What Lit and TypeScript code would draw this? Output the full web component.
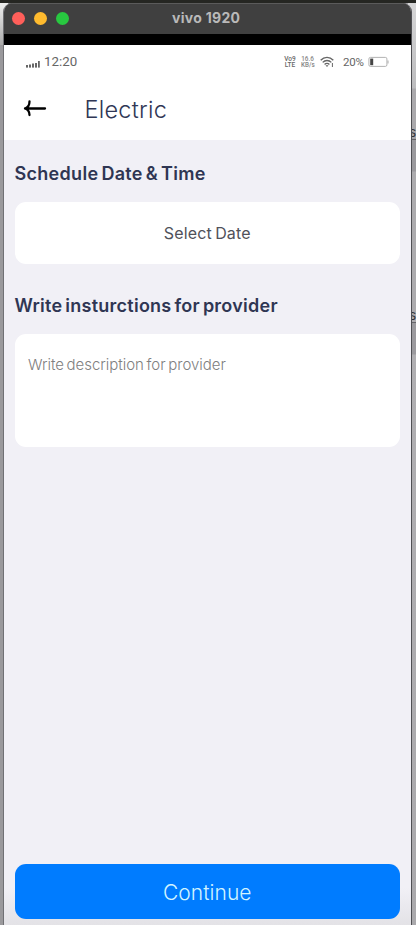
import { LitElement, html, css } from "lit";
import { customElement } from "lit/decorators.js";

@customElement("status-bar")
class StatusBar extends LitElement {
  static styles = css`
    :host { display: flex; align-items: center; height: 34px; padding: 0 22px 0 22px; color: #666; font-family: Roboto, sans-serif; box-sizing: border-box; }
    .signal { width: 15px; height: 8px; margin-top: 4px; }
    .time { font-size: 13.3px; margin-left: 3px; line-height: 16px; }
    .space { flex: 1; }
    .net { font-size: 6.5px; line-height: 6px; text-align: center; font-weight: 500; width: 12px; margin-right: 5px; white-space: nowrap; }
    .net.speed { width: 13px; margin-right: 6px; color: #858585; font-size: 6.3px; }
    .wifi { width: 14px; height: 12px; margin-right: 9px; }
    .pct { font-size: 11.5px; line-height: 16px; width: 21px; margin-right: 4px; white-space: nowrap; letter-spacing: -0.2px; }
    .battery { width: 21px; height: 12px; }
  `;
  render() {
    return html`
      <svg class="signal" viewBox="0 0 15 8" fill="#666">
        <rect x="0" y="5" width="2" height="2.6" /><rect x="3" y="4.5" width="2" height="3.1" /><rect x="6" y="3.5" width="2" height="4.1" /><rect x="9" y="3" width="2" height="4.6" /><rect x="12" y="1" width="1.8" height="6.6" />
      </svg>
      <span class="time">12:20</span>
      <span class="space"></span>
      <span class="net">Vo9<br />LTE</span>
      <span class="net speed">16.6<br />KB/s</span>
      <svg class="wifi" viewBox="0 0 14 12" fill="none" stroke="#666" stroke-width="1.4">
        <path d="M.7 4.2C4.3 .4 9.7 .4 13.3 4.2" /><path d="M2.7 6.4c2.4-2.6 6.2-2.6 8.6 0" /><path d="M4.6 8.4c1.4-1.4 3.4-1.4 4.8 0" />
        <path d="M5.5 9.3h3L7 11z" fill="#666" stroke="none" /><path d="M12.4 7v4" stroke-width="1" />
      </svg>
      <span class="pct">20%</span>
      <svg class="battery" viewBox="0 0 21 12" fill="none">
        <rect x=".9" y="1.4" width="18" height="9" rx="1.5" stroke="#aaa" stroke-width=".9" />
        <rect x="2.2" y="2.6" width="3" height="6.6" fill="#444" /><path d="M20 4.5v3" stroke="#aaa" />
      </svg>
    `;
  }
}

@customElement("app-root")
class AppRoot extends LitElement {
  static styles = css`
    :host { display: block; width: 416px; height: 925px; overflow: hidden; position: relative; background: linear-gradient(90deg, #9a999c 0 50%, #a9a8ab 50%); font-family: Inter, sans-serif; }
    .strip { height: 3px; background: #252622; }
    .desk { position: absolute; z-index: 0; right: 0; top: 3px; width: 8px; height: 922px; background: linear-gradient(#d6d6d7 0, #bcbcbe 85px, #aaa9ac 86px, #aaa9ac 135px, #9a999d 136px, #9a999d 168px, #acabae 169px, #acabae 319px, #9b9a9e 320px, #9b9a9e 351px, #b0afb2 352px, #aaa9ac 100%); }
    .peek { position: absolute; right: 0; width: 7px; font: 14px/20px "Liberation Sans", sans-serif; color: #343438; border-bottom: 1px solid #66666a; height: 17px; }
    .first { top: 122px; }
    .second { top: 305px; }
    .corner { position: absolute; left: 0; top: 3px; width: 8px; height: 42px; background: linear-gradient(#eee, #aaa); }
    .window { position: relative; margin: 0 4px 0 3px; height: 922px; box-sizing: border-box; border: solid #707074; border-width: 0 1px; border-right-color: #505054; border-radius: 9px 9px 0 0; overflow: hidden; display: flex; flex-direction: column; background: linear-gradient(#f1f0f6 0 885px, #e3e2e6); }
    .titlebar { height: 31px; background: #404040; display: flex; align-items: center; padding-left: 8px; flex: none; box-shadow: inset 0 1px #5b5b5b; }
    .dot { width: 13px; height: 13px; border-radius: 50%; margin-right: 9px; }
    .red { background: #ff5f5a; }
    .yellow { background: #ffbb2e; }
    .green { background: #28c840; }
    .name { color: #b9b9b9; font-weight: 700; font-size: 14px; line-height: 18px; margin: -2px 0 0 94px; white-space: nowrap; letter-spacing: 0.3px; }
    .notch { height: 11px; background: #000; flex: none; }
    .head { height: 95px; background: #fff; flex: none; }
    .nav { display: flex; align-items: center; height: 61px; padding-left: 19px; }
    .back { width: 24px; height: 18px; margin-top: -3px; }
    .title { margin: 1px 0 0 37.5px; font-size: 23.5px; line-height: 30px; color: #303755; font-weight: 350; letter-spacing: 0.25px; }
    .form { padding: 0 11px 0 10.5px; display: flex; flex-direction: column; flex: 1; }
    .label { font-size: 18px; font-weight: 600; color: #2f3653; line-height: 24px; white-space: nowrap; word-spacing: -1.8px; }
    .l1 { margin: 22px 0 15.5px; letter-spacing: 0.3px; }
    .l2 { margin: 30px 0 15.5px; letter-spacing: 0.25px; }
    .card { background: #fff; border-radius: 11px; box-sizing: border-box; white-space: nowrap; }
    .date { height: 62.5px; display: flex; align-items: center; justify-content: center; font-size: 16px; color: #50515a; padding-top: 1px; letter-spacing: 0.18px; word-spacing: -1.5px; }
    .desc { height: 113px; padding: 21px 13.5px; font-size: 15px; line-height: 20px; color: #808080; font-weight: 350; letter-spacing: -0.03px; word-spacing: -1.5px; }
    .go { margin: auto 0 6.5px; height: 54.5px; border: 0; border-radius: 11px; background: #007cff; color: #d2f4ff; font: 300 21px/30px Inter, sans-serif; letter-spacing: 0.05px; padding: 3px 0 0; }
  `;
  render() {
    return html`
      <div class="strip"></div>
      <div class="desk"></div>
      <div class="corner"></div>
      <span class="peek first">s</span>
      <span class="peek second">s</span>
      <div class="window">
        <div class="titlebar">
          <i class="dot red"></i><i class="dot yellow"></i><i class="dot green"></i>
          <span class="name">vivo 1920</span>
        </div>
        <div class="notch"></div>
        <div class="head">
          <status-bar></status-bar>
          <div class="nav">
            <svg class="back" viewBox="0 0 24 18" fill="none" stroke="#000" stroke-width="2.3" stroke-linecap="round" stroke-linejoin="round">
              <path d="M2 9.500h20M6.500 2.500C6.500 5.500 5 8.500 2 9.500c3 1 4.500 3.500 4.500 6.500" />
            </svg>
            <span class="title">Electric</span>
          </div>
        </div>
        <div class="form">
          <div class="label l1">Schedule Date &amp; Time</div>
          <div class="card date">Select Date</div>
          <div class="label l2">Write insturctions for provider</div>
          <div class="card desc">Write description for provider</div>
          <button class="go">Continue</button>
        </div>
      </div>
    `;
  }
}
